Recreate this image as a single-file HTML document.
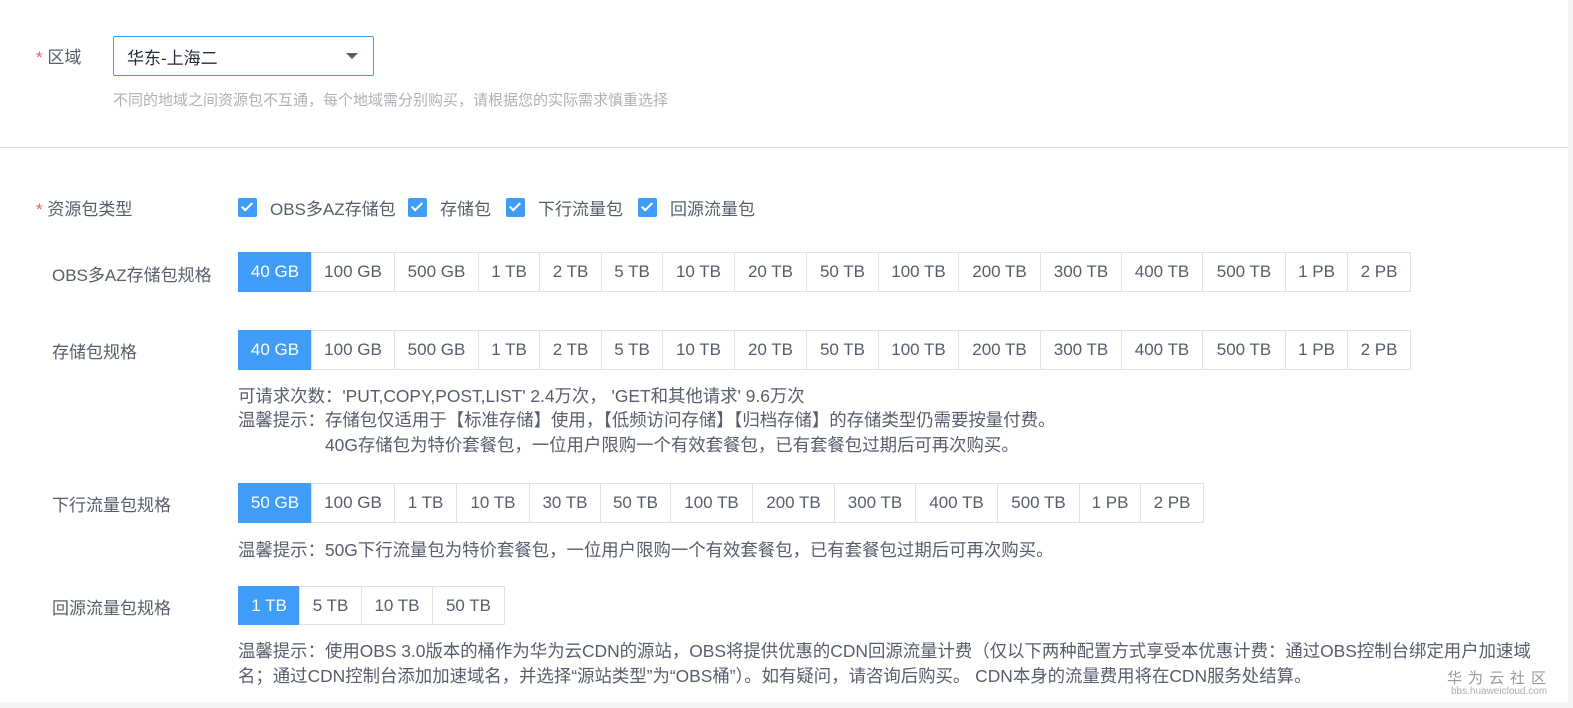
<!DOCTYPE html>
<html><head><meta charset="utf-8"><style>
body{margin:0;width:1573px;height:708px;background:#fff;font-family:"Liberation Sans","Noto Sans CJK SC",sans-serif;color:#575d6c;position:relative;overflow:hidden}
.a{position:absolute;white-space:nowrap}
.star{color:#f25c54}
.lbl{font-size:17px}
.row{position:absolute;display:flex}
.row div{box-sizing:border-box;border:1px solid #dfe1e6;margin-left:-1px;display:flex;align-items:center;justify-content:center;font-size:17px;color:#575d6c;background:#fff}
.row div.on{background:#3f9df8;border-color:#3f9df8;color:#fff}
.cb{position:absolute;top:198px;width:19px;height:19px;background:#3f9df8;border-radius:2px}
.cb:after{content:"";position:absolute;left:6px;top:2px;width:4px;height:9px;border:solid #fff;border-width:0 2px 2px 0;transform:rotate(45deg)}
.ct{position:absolute;top:195px;font-size:17px}
.hint{font-size:17.4px;color:#575d6c}
</style></head><body>
<div class="a lbl" style="left:36px;top:43px"><span class="star">*</span> 区域</div>
<div class="a" style="left:113px;top:36px;width:261px;height:40px;border:1px solid #3f9df8;border-radius:2px;box-sizing:border-box"></div>
<div class="a" style="left:127px;top:44px;font-size:17px;color:#252b3a">华东-上海二</div>
<div class="a" style="left:346px;top:53px;width:0;height:0;border-left:6px solid transparent;border-right:6px solid transparent;border-top:6px solid #575d6c"></div>
<div class="a" style="left:113px;top:89px;font-size:15px;color:#adb0b8">不同的地域之间资源包不互通，每个地域需分别购买，请根据您的实际需求慎重选择</div>
<div class="a" style="left:0;top:147px;width:1573px;height:1px;background:#e0e0e0"></div>
<div class="a" style="left:1568px;top:0;width:5px;height:708px;background:#f3f4f6"></div>
<div class="a" style="left:0;top:702px;width:1573px;height:6px;background:#f3f4f6"></div>

<div class="a lbl" style="left:36px;top:195px"><span class="star">*</span> 资源包类型</div>
<span class="cb" style="left:238px"></span><span class="ct" style="left:270px">OBS多AZ存储包</span>
<span class="cb" style="left:408px"></span><span class="ct" style="left:440px">存储包</span>
<span class="cb" style="left:506px"></span><span class="ct" style="left:538px">下行流量包</span>
<span class="cb" style="left:638px"></span><span class="ct" style="left:670px">回源流量包</span>

<div class="a lbl" style="left:52px;top:261px">OBS多AZ存储包规格</div>
<div class="row" style="left:239px;top:252px;height:40px">
<div class="on" style="width:74px">40 GB</div><div style="width:84px">100 GB</div><div style="width:85px">500 GB</div><div style="width:62px">1 TB</div><div style="width:63px">2 TB</div><div style="width:62px">5 TB</div><div style="width:73px">10 TB</div><div style="width:73px">20 TB</div><div style="width:73px">50 TB</div><div style="width:81px">100 TB</div><div style="width:83px">200 TB</div><div style="width:82px">300 TB</div><div style="width:82px">400 TB</div><div style="width:84px">500 TB</div><div style="width:63px">1 PB</div><div style="width:64px">2 PB</div></div>

<div class="a lbl" style="left:52px;top:338px">存储包规格</div>
<div class="row" style="left:239px;top:330px;height:40px">
<div class="on" style="width:74px">40 GB</div><div style="width:84px">100 GB</div><div style="width:85px">500 GB</div><div style="width:62px">1 TB</div><div style="width:63px">2 TB</div><div style="width:62px">5 TB</div><div style="width:73px">10 TB</div><div style="width:73px">20 TB</div><div style="width:73px">50 TB</div><div style="width:81px">100 TB</div><div style="width:83px">200 TB</div><div style="width:82px">300 TB</div><div style="width:82px">400 TB</div><div style="width:84px">500 TB</div><div style="width:63px">1 PB</div><div style="width:64px">2 PB</div></div>
<div class="a hint" style="left:238px;top:383px">可请求次数：'PUT,COPY,POST,LIST' 2.4万次， 'GET和其他请求' 9.6万次</div>
<div class="a hint" style="left:238px;top:407px">温馨提示：存储包仅适用于【标准存储】使用，【低频访问存储】【归档存储】的存储类型仍需要按量付费。</div>
<div class="a hint" style="left:325px;top:432px">40G存储包为特价套餐包，一位用户限购一个有效套餐包，已有套餐包过期后可再次购买。</div>

<div class="a lbl" style="left:52px;top:491px">下行流量包规格</div>
<div class="row" style="left:239px;top:483px;height:40px">
<div class="on" style="width:74px">50 GB</div><div style="width:84px">100 GB</div><div style="width:63px">1 TB</div><div style="width:74px">10 TB</div><div style="width:72px">30 TB</div><div style="width:71px">50 TB</div><div style="width:83px">100 TB</div><div style="width:83px">200 TB</div><div style="width:82px">300 TB</div><div style="width:83px">400 TB</div><div style="width:83px">500 TB</div><div style="width:62px">1 PB</div><div style="width:64px">2 PB</div></div>
<div class="a hint" style="left:238px;top:537px">温馨提示：50G下行流量包为特价套餐包，一位用户限购一个有效套餐包，已有套餐包过期后可再次购买。</div>

<div class="a lbl" style="left:52px;top:594px">回源流量包规格</div>
<div class="row" style="left:239px;top:586px;height:39px">
<div class="on" style="width:62px">1 TB</div><div style="width:63px">5 TB</div><div style="width:72px">10 TB</div><div style="width:73px">50 TB</div></div>
<div class="a hint" style="left:238px;top:638px">温馨提示：使用OBS 3.0版本的桶作为华为云CDN的源站，OBS将提供优惠的CDN回源流量计费（仅以下两种配置方式享受本优惠计费：通过OBS控制台绑定用户加速域</div>
<div class="a hint" style="left:238px;top:663px">名；通过CDN控制台添加加速域名，并选择“源站类型”为“OBS桶”）。如有疑问，请咨询后购买。 CDN本身的流量费用将在CDN服务处结算。</div>
<div class="a" style="left:1447px;top:667px;font-size:15px;color:#999;letter-spacing:6px">华为云社区</div>
<div class="a" style="left:1451px;top:686px;font-size:10px;color:#aaa">bbs.huaweicloud.com</div>
</body></html>
